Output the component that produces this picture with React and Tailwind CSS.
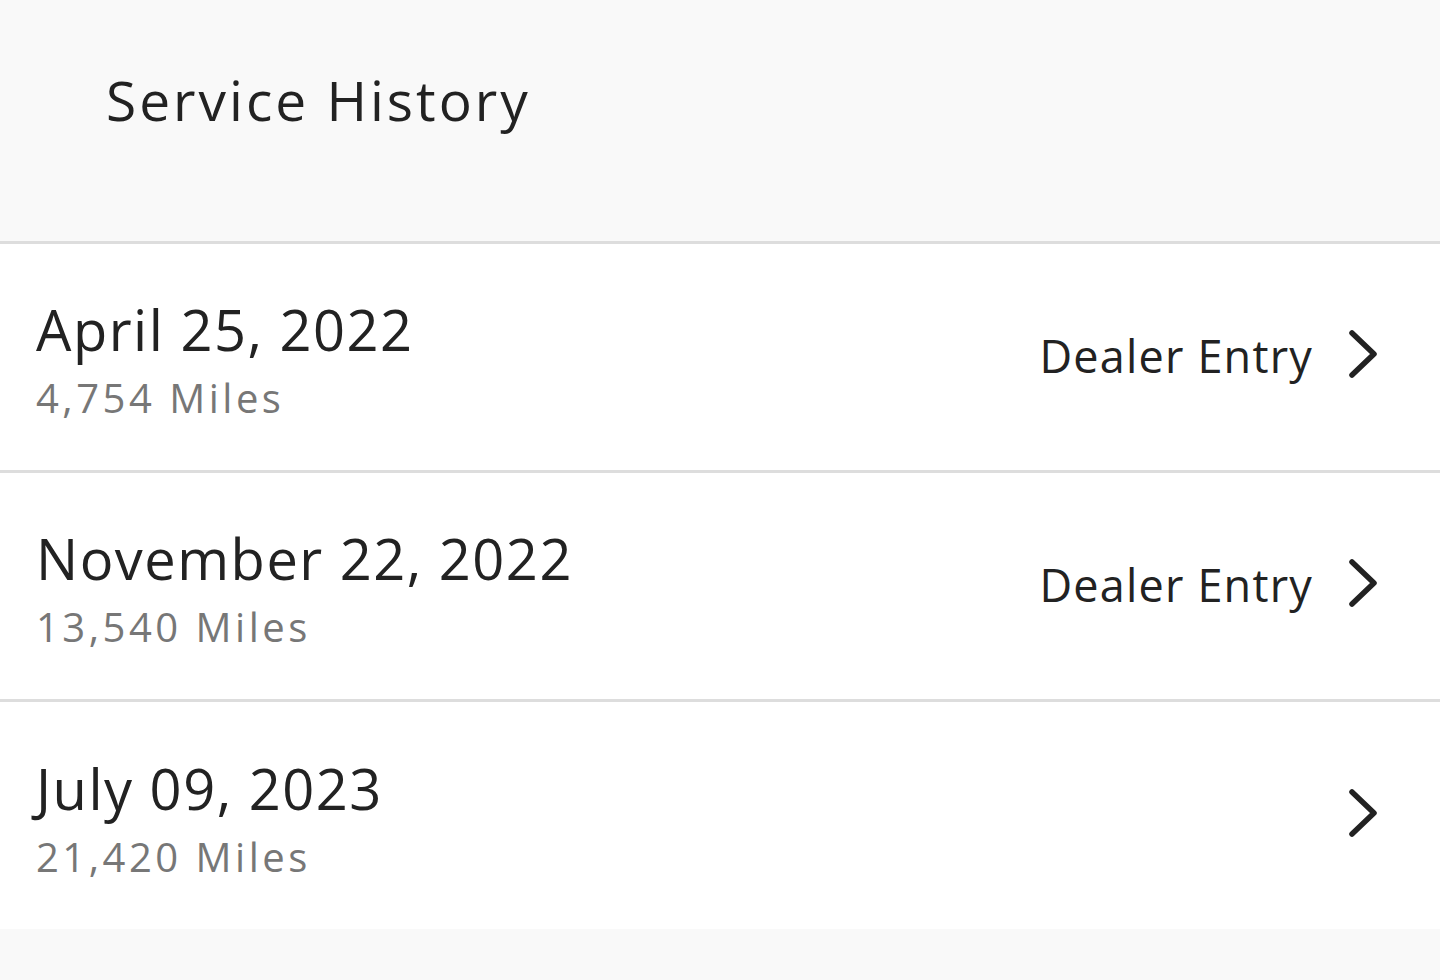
import React from 'react'

const entries = [
  { date: 'April 25, 2022', miles: '4,754 Miles', source: 'Dealer Entry' },
  { date: 'November 22, 2022', miles: '13,540 Miles', source: 'Dealer Entry' },
  { date: 'July 09, 2023', miles: '21,420 Miles', source: '' },
]

function Chevron() {
  return (
    <svg width="32" height="52" viewBox="0 0 32 52" fill="none" className="mb-[6px] shrink-0">
      <polyline points="5,5 27,26 5,47" stroke="#222222" strokeWidth="5.5" strokeLinecap="round" strokeLinejoin="round" />
    </svg>
  )
}

function ServiceRow({ entry, last }) {
  return (
    <div className={`flex items-center justify-between bg-white pl-[36px] pr-[61px] ${last ? 'h-[227px]' : 'h-[229px] border-b-[3px] border-[#dddddd]'}`}>
      <div className="flex flex-col pt-[6px]">
        <div className="text-[56px] font-medium leading-[60px] tracking-[1.5px] text-[#222222]">{entry.date}</div>
        <div className="mt-[16px] text-[40px] leading-[46px] tracking-[3.5px] text-[#777777]">{entry.miles}</div>
      </div>
      <div className="flex items-center gap-[34px]">
        {entry.source ? <span className="mb-[4px] text-[45px] leading-none tracking-[1.2px] text-[#222222]">{entry.source}</span> : null}
        <Chevron />
      </div>
    </div>
  )
}

export default function App() {
  return (
    <div className="min-h-[980px] bg-[#f9f9f9] font-['Open_Sans',sans-serif]">
      <header className="h-[244px] border-b-[3px] border-[#dddddd] bg-[#f9f9f9] pl-[106px] pt-[72px]">
        <h1 className="text-[55px] leading-none tracking-[3px] text-[#222222]">Service History</h1>
      </header>
      {entries.map((entry, index) => (
        <ServiceRow key={entry.date} entry={entry} last={index === entries.length - 1} />
      ))}
    </div>
  )
}
